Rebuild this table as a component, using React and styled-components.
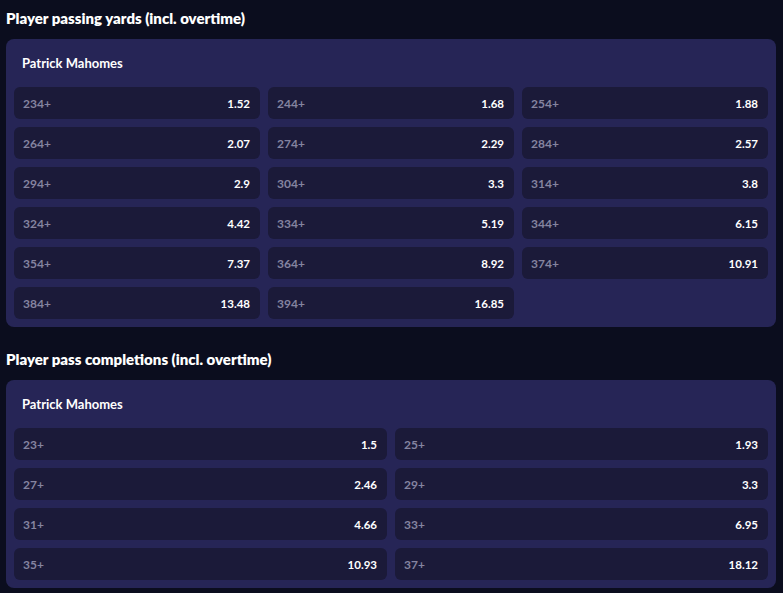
import React from "react"
import styled, { createGlobalStyle } from "styled-components"

const GlobalStyle = createGlobalStyle`
  html, body {
    margin: 0;
    padding: 0;
    background: #0b0d1e;
  }
  body {
    font-family: Lato, "Liberation Sans", sans-serif;
    color: #fff;
  }
`

const Page = styled.div`
  display: flex;
  flex-direction: column;
  gap: 14px;
  padding: 0 7px 0 6px;
`

const Section = styled.section`
  display: flex;
  flex-direction: column;
`

const Heading = styled.h2`
  margin: 0;
  padding: 8px 0 11px;
  font-size: 15px;
  line-height: 20px;
  font-weight: 800;
  color: #fff;
`

const Panel = styled.div`
  padding: 0 8px 8px;
  border-radius: 8px;
  background: #262556;
`

const PlayerName = styled.div`
  padding: 16px 0 16px 8px;
  font-size: 13px;
  line-height: 16px;
  font-weight: 700;
  color: #fff;
`

const Grid = styled.div`
  display: grid;
  grid-template-columns: repeat(${({ cols }) => cols}, 1fr);
  grid-auto-rows: 32px;
  gap: 8px;
`

const Cell = styled.div`
  display: flex;
  align-items: center;
  justify-content: space-between;
  padding: 0 10px 0 9px;
  border-radius: 6px;
  background: #1b1a39;
  font-weight: 700;
`

const Line = styled.span`
  font-size: 12px;
  color: #8584a0;
`

const Odds = styled.span`
  font-size: 11.5px;
  color: #fff;
`

const markets = [
  {
    title: "Player passing yards (incl. overtime)",
    cols: 3,
    lines: [
      ["234+", "1.52"], ["244+", "1.68"], ["254+", "1.88"],
      ["264+", "2.07"], ["274+", "2.29"], ["284+", "2.57"],
      ["294+", "2.9"], ["304+", "3.3"], ["314+", "3.8"],
      ["324+", "4.42"], ["334+", "5.19"], ["344+", "6.15"],
      ["354+", "7.37"], ["364+", "8.92"], ["374+", "10.91"],
      ["384+", "13.48"], ["394+", "16.85"],
    ],
  },
  {
    title: "Player pass completions (incl. overtime)",
    cols: 2,
    lines: [
      ["23+", "1.5"], ["25+", "1.93"],
      ["27+", "2.46"], ["29+", "3.3"],
      ["31+", "4.66"], ["33+", "6.95"],
      ["35+", "10.93"], ["37+", "18.12"],
    ],
  },
]

export default function App() {
  return (
    <>
      <GlobalStyle />
      <Page>
        {markets.map(({ title, cols, lines }) => (
          <Section key={title}>
            <Heading>{title}</Heading>
            <Panel>
              <PlayerName>Patrick Mahomes</PlayerName>
              <Grid cols={cols}>
                {lines.map(([line, odds]) => (
                  <Cell key={line}>
                    <Line>{line}</Line>
                    <Odds>{odds}</Odds>
                  </Cell>
                ))}
              </Grid>
            </Panel>
          </Section>
        ))}
      </Page>
    </>
  )
}
